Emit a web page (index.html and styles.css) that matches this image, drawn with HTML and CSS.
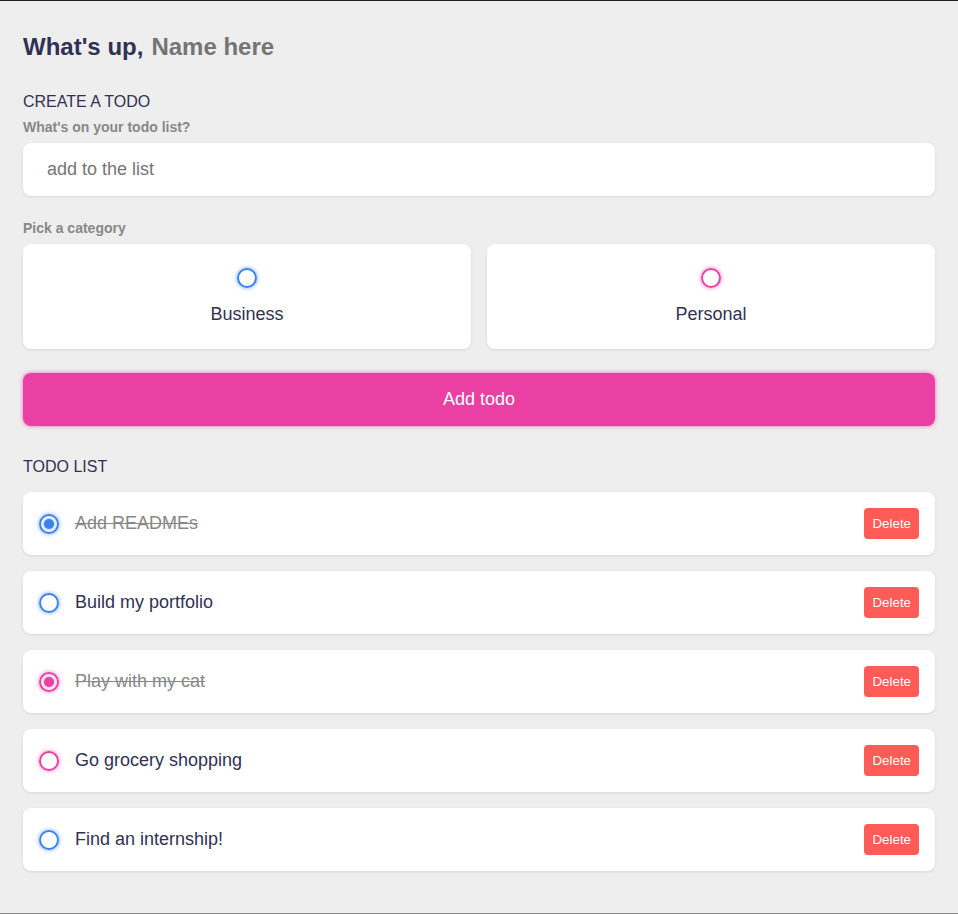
FILE: index.html
```html
<!DOCTYPE html>
<html lang="en">
<head>
<meta charset="utf-8">
<title>Todo</title>
<link rel="stylesheet" href="styles.css">
</head>
<body>
<main class="app">
  <section class="greeting">
    <h2 class="title">What's up, <input type="text" class="name-input" placeholder="Name here"></h2>
  </section>

  <section class="create-todo">
    <h3>CREATE A TODO</h3>
    <form>
      <h4>What's on your todo list?</h4>
      <input type="text" class="todo-input" placeholder="add to the list">
      <h4>Pick a category</h4>
      <div class="options">
        <label class="option">
          <span class="bubble business"></span>
          <div class="option-name">Business</div>
        </label>
        <label class="option">
          <span class="bubble personal"></span>
          <div class="option-name">Personal</div>
        </label>
      </div>
      <button type="button" class="submit">Add todo</button>
    </form>
  </section>

  <section class="todo-list">
    <h3>TODO LIST</h3>
    <div class="list">
      <div class="todo-item done">
        <span class="bubble business checked"></span>
        <div class="todo-content">Add READMEs</div>
        <div class="actions"><button class="delete">Delete</button></div>
      </div>
      <div class="todo-item">
        <span class="bubble business"></span>
        <div class="todo-content">Build my portfolio</div>
        <div class="actions"><button class="delete">Delete</button></div>
      </div>
      <div class="todo-item done">
        <span class="bubble personal checked"></span>
        <div class="todo-content">Play with my cat</div>
        <div class="actions"><button class="delete">Delete</button></div>
      </div>
      <div class="todo-item">
        <span class="bubble personal"></span>
        <div class="todo-content">Go grocery shopping</div>
        <div class="actions"><button class="delete">Delete</button></div>
      </div>
      <div class="todo-item">
        <span class="bubble business"></span>
        <div class="todo-content">Find an internship!</div>
        <div class="actions"><button class="delete">Delete</button></div>
      </div>
    </div>
  </section>
</main>
</body>
</html>
```

FILE: styles.css
```css
:root {
  --primary: #ea40a4;
  --business: #3a82ee;
  --personal: #ea40a4;
  --light: #eeeeee;
  --grey: #888888;
  --dark: #313154;
  --danger: #ff5b57;
  --shadow: 0 1px 3px rgba(0, 0, 0, 0.1);
  --business-glow: 0 0 4px rgba(58, 130, 238, 0.75);
  --personal-glow: 0 0 4px rgba(234, 64, 164, 0.75);
}

* {
  margin: 0;
  padding: 0;
  box-sizing: border-box;
  border: none;
  outline: none;
  background: none;
  font-family: "Liberation Sans", Arial, sans-serif;
}

html, body {
  height: 100%;
}

body {
  background: var(--light);
  color: var(--dark);
  border-top: 1px solid #222222;
  border-bottom: 1px solid #8a8a8a;
  overflow: hidden;
}

section {
  margin-top: 32px;
  margin-bottom: 32px;
  padding-left: 23px;
  padding-right: 23px;
}

h3 {
  color: var(--dark);
  font-size: 16px;
  font-weight: 400;
  margin-bottom: 8px;
}

h4 {
  color: var(--grey);
  font-size: 14px;
  font-weight: 700;
  margin-bottom: 8px;
}

.greeting .title {
  display: flex;
  font-size: 24px;
  font-weight: 700;
  color: var(--dark);
}

.name-input {
  margin-left: 8px;
  flex: 1 1 0%;
  min-width: 0;
  font-size: 24px;
  font-weight: 700;
  color: #757575;
}

.name-input::placeholder {
  color: #757575;
  opacity: 1;
}

.todo-input {
  display: block;
  width: 100%;
  font-size: 18px;
  padding: 16px 24px;
  color: var(--dark);
  background-color: #ffffff;
  border-radius: 8px;
  box-shadow: var(--shadow);
  margin-bottom: 24px;
}

.todo-input::placeholder {
  color: #757575;
  opacity: 1;
}

.options {
  display: grid;
  grid-template-columns: repeat(2, 1fr);
  gap: 16px;
  margin-bottom: 24px;
}

.option {
  display: flex;
  flex-direction: column;
  align-items: center;
  justify-content: center;
  background-color: #ffffff;
  padding: 24px;
  box-shadow: var(--shadow);
  border-radius: 8px;
  cursor: pointer;
}

.option-name {
  color: var(--dark);
  font-size: 18px;
  margin-top: 16px;
}

.bubble {
  display: flex;
  align-items: center;
  justify-content: center;
  width: 20px;
  height: 20px;
  flex: none;
  border-radius: 999px;
  border: 2px solid var(--business);
  box-shadow: var(--business-glow);
}

.bubble.personal {
  border-color: var(--personal);
  box-shadow: var(--personal-glow);
}

.bubble.checked::after {
  content: "";
  display: block;
  width: 10px;
  height: 10px;
  border-radius: 999px;
  background-color: var(--business);
  box-shadow: var(--business-glow);
}

.bubble.personal.checked::after {
  background-color: var(--personal);
  box-shadow: var(--personal-glow);
}

.submit {
  display: block;
  width: 100%;
  font-size: 18px;
  padding: 16px 24px;
  color: #ffffff;
  background-color: var(--primary);
  box-shadow: var(--personal-glow);
  border-radius: 8px;
  cursor: pointer;
  line-height: normal;
}

.list {
  margin: 16px 0;
}

.todo-item {
  display: flex;
  align-items: center;
  background-color: #ffffff;
  padding: 16px;
  border-radius: 8px;
  box-shadow: var(--shadow);
  margin-bottom: 16px;
}

.todo-item .bubble {
  margin-right: 16px;
}

.todo-content {
  flex: 1 1 0%;
  color: var(--dark);
  font-size: 18px;
}

.todo-item.done .todo-content {
  text-decoration: line-through;
  color: var(--grey);
}

.actions {
  display: flex;
  align-items: center;
}

.delete {
  display: block;
  padding: 8px;
  border-radius: 4px;
  color: #ffffff;
  font-size: 13.33px;
  background-color: var(--danger);
  cursor: pointer;
}
```
